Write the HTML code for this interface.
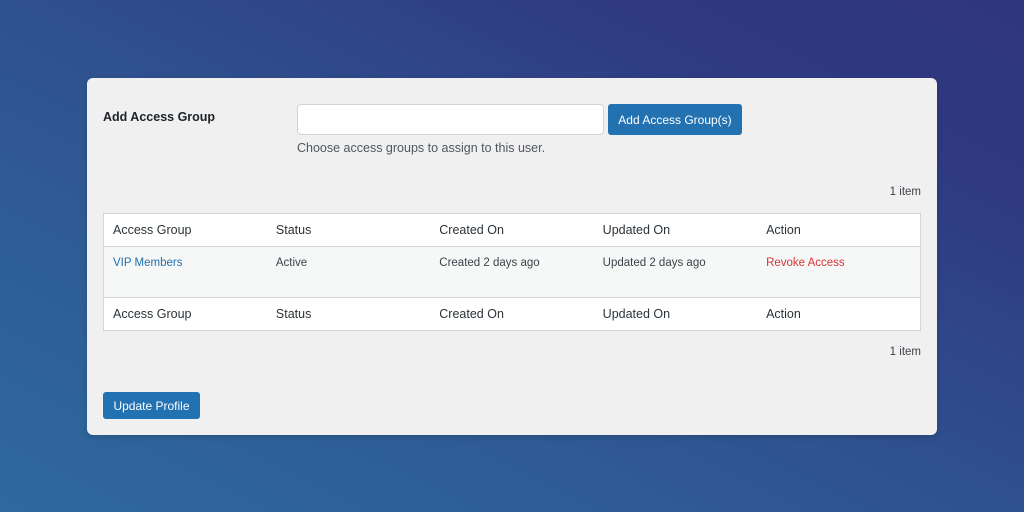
<!DOCTYPE html>
<html><head><style>
*{margin:0;padding:0;box-sizing:border-box}
body{width:1024px;height:512px;overflow:hidden;position:relative;font-family:"Liberation Sans",sans-serif;
background:linear-gradient(to top right,#2e6a9e 0%,#2f5490 45%,#2f3a80 80%,#30367c 100%);}
.card{position:absolute;left:87px;top:78px;width:850px;height:357px;background:#f0f0f1;border-radius:6px;box-shadow:0 2px 6px rgba(0,0,0,.15)}
.abs{position:absolute}
.lbl{left:16px;top:32px;font-size:12.5px;font-weight:bold;color:#1d2327}
.inp{left:210px;top:26px;width:307px;height:31px;background:#fff;border:1px solid #d0d3d6;border-radius:4px}
.btn{background:#2271b1;color:#fff;border-radius:3px;font-size:12px;display:flex;align-items:center;justify-content:center}
.desc{left:210px;top:63px;font-size:12.5px;color:#50575e}
.cnt{right:16px;font-size:11.5px;color:#3c434a}
table{position:absolute;left:16px;top:135px;width:818px;border-collapse:collapse;border:1px solid #d5d6d8;background:#fff;font-size:12.5px;color:#2c3338}
td{padding:0 0 0 9px;width:163px}
tr.h td{height:33px}
tr.d td{height:51px;background:#f6f7f7;font-size:11.5px;vertical-align:top;padding-top:10px;border-top:1px solid #d5d6d8;border-bottom:1px solid #d5d6d8;color:#3c434a}
</style></head><body>
<div class="card">
<div class="abs lbl">Add Access Group</div>
<div class="abs inp"></div>
<div class="abs btn" style="left:521px;top:26px;width:134px;height:31px">Add Access Group(s)</div>
<div class="abs desc">Choose access groups to assign to this user.</div>
<div class="abs cnt" style="top:108px">1 item</div>
<table>
<tr class="h"><td>Access Group</td><td>Status</td><td>Created On</td><td>Updated On</td><td>Action</td></tr>
<tr class="d"><td style="color:#2271b1">VIP Members</td><td>Active</td><td>Created 2 days ago</td><td>Updated 2 days ago</td><td style="color:#d63638">Revoke Access</td></tr>
<tr class="h"><td>Access Group</td><td>Status</td><td>Created On</td><td>Updated On</td><td>Action</td></tr>
</table>
<div class="abs cnt" style="top:268px">1 item</div>
<div class="abs btn" style="left:16px;top:314px;width:97px;height:27px">Update Profile</div>
</div>
</body></html>
